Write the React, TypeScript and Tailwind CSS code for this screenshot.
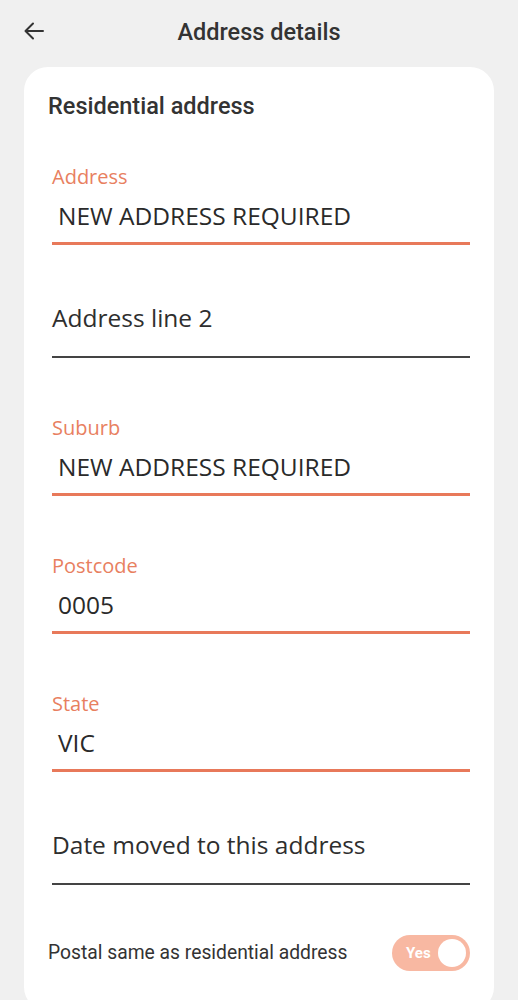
import type { ReactNode } from "react";

const sans = "font-['Roboto','Liberation_Sans',sans-serif]";
const open = "font-['Open_Sans','Liberation_Sans',sans-serif]";

function BackArrow() {
  return (
    <svg width="24" height="24" viewBox="0 0 24 24" fill="none" className="text-[#333]">
      <path d="M21 12H4M11 4.5L3.5 12L11 19.5" stroke="currentColor" strokeWidth="2" strokeLinecap="round" strokeLinejoin="round" />
    </svg>
  );
}

function FilledField({ label, value }: { label: string; value: string }) {
  return (
    <div className={`${open} ml-1 mt-[60px] border-b-[3px] border-[#e8795a] pb-[10px]`}>
      <div className="h-5 text-[20px] leading-5 text-[#e8805f]">{label}</div>
      <div className="mt-[13px] h-8 pl-1.5 text-[24.5px] leading-8 text-[#2a2a2a]">{value}</div>
    </div>
  );
}

function EmptyField({ placeholder }: { placeholder: string }) {
  return (
    <div className={`${open} ml-1 mt-[57px] border-b-2 border-[#444] pb-[22px]`}>
      <div className="h-8 text-[24.5px] leading-8 text-[#2e2e2e]">{placeholder}</div>
    </div>
  );
}

function Card({ children }: { children: ReactNode }) {
  return <div className="mx-6 mt-[3px] rounded-[24px] bg-white px-6 pb-10 pt-[25px]">{children}</div>;
}

export default function App() {
  return (
    <div className="min-h-[1000px] overflow-hidden bg-[#f0f0f0]">
      <div className="relative flex h-16 items-center justify-center pt-0.5">
        <div className="absolute left-[22px] top-[19px]">
          <BackArrow />
        </div>
        <h1 className={`${sans} text-[23.5px] font-medium text-[#333]`}>Address details</h1>
      </div>

      <Card>
        <h2 className={`${sans} text-[23.5px] font-medium leading-7 text-[#333]`}>Residential address</h2>
        <div className="-mt-[13px]">
          <FilledField label="Address" value="NEW ADDRESS REQUIRED" />
          <EmptyField placeholder="Address line 2" />
          <FilledField label="Suburb" value="NEW ADDRESS REQUIRED" />
          <FilledField label="Postcode" value="0005" />
          <FilledField label="State" value="VIC" />
          <EmptyField placeholder="Date moved to this address" />
        </div>

        <div className="mt-[50px] flex items-center justify-between">
          <span className={`${sans} text-[19.3px] text-[#333]`}>Postal same as residential address</span>
          <div className="flex h-9 w-[78px] items-center justify-between rounded-full bg-[#f8b8a2] pl-[14px] pr-1">
            <span className={`${sans} text-[15px] font-bold text-white`}>Yes</span>
            <span className="h-7 w-7 rounded-full bg-white" />
          </div>
        </div>
      </Card>
    </div>
  );
}
